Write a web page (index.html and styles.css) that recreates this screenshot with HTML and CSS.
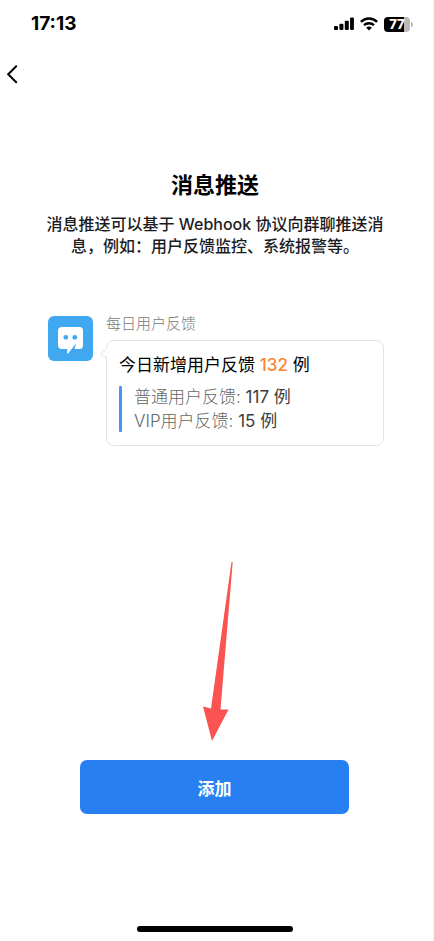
FILE: index.html
```
<!DOCTYPE html>
<html lang="zh-CN">
<head>
<meta charset="utf-8">
<meta name="viewport" content="width=device-width, initial-scale=1">
<title>消息推送</title>
<link rel="stylesheet" href="styles.css">
</head>
<body>
<div class="screen">
  <header>
    <div class="status">
      <time class="clock">17:13</time>
      <div class="indicators">
        <svg width="20" height="14" viewBox="0 0 20 14" aria-hidden="true">
          <rect x="0" y="9" width="4" height="4" rx="1"/>
          <rect x="5.4" y="6.7" width="4" height="6.3" rx="1"/>
          <rect x="10.8" y="3.8" width="4" height="9.2" rx="1"/>
          <rect x="16.1" y="0.5" width="3.8" height="12.5" rx="1"/>
        </svg>
        <svg width="18" height="14" viewBox="0 0 18 14" aria-hidden="true">
          <path d="M0.900 4.900A11.300 11.300 0 0 1 17.100 4.900" fill="none" stroke="#000" stroke-width="2.500"/>
          <path d="M4 8.200A7.200 7.200 0 0 1 14 8.200" fill="none" stroke="#000" stroke-width="2.400"/>
          <path d="M9 13.500L6.200 10.700A3.900 3.900 0 0 1 11.800 10.700Z"/>
        </svg>
        <div class="battery"><span class="level">77</span></div>
      </div>
    </div>
    <nav>
      <button class="back" type="button" aria-label="返回">
        <svg width="12" height="20" viewBox="0 0 12 20" aria-hidden="true">
          <path d="M10.2 2.2L2.2 10.2L10.2 18.2" fill="none" stroke="#000" stroke-width="2" stroke-linecap="round"/>
        </svg>
      </button>
    </nav>
  </header>

  <main>
    <h1>消息推送</h1>
    <p class="intro">消息推送可以基于 Webhook 协议向群聊推送消<br>息，例如：用户反馈监控、系统报警等。</p>

    <section class="message">
      <svg class="avatar" width="45" height="45" viewBox="0 0 45 45" aria-hidden="true">
        <rect width="45" height="45" rx="6" fill="#40a8f0"/>
        <path d="M14 11H31.500a3.500 3.500 0 0 1 3.500 3.500V29.500a3.500 3.500 0 0 1-3.500 3.500H25L19.500 38V33H14a4 4 0 0 1-4-4V15a4 4 0 0 1 4-4Z" fill="#fff"/>
        <path d="M28.200 27L19.500 38H24L26.500 33Z" fill="#40a8f0"/>
        <path d="M28.200 27L19.500 38V33Z" fill="#fff"/>
        <circle cx="17.800" cy="21.300" r="2.400" fill="#40a8f0"/>
        <circle cx="26.800" cy="21.300" r="2.400" fill="#40a8f0"/>
      </svg>
      <div class="body">
        <div class="sender">每日用户反馈</div>
        <div class="bubble">
          <svg class="tail" width="8" height="14" viewBox="0 0 8 14" aria-hidden="true">
            <path d="M7 0.500Q6 3.500 1.500 6Q0.300 7 1.500 8Q4.500 9.500 7 10.500" fill="#fff" stroke="#e3e3e5"/>
            <path d="M7.500 1V10.200" stroke="#fff" stroke-width="2"/>
          </svg>
          <div class="total">今日新增用户反馈 <span class="count">132</span> 例</div>
          <div class="details">
            <div>普通用户反馈: <span class="value">117 例</span></div>
            <div>VIP用户反馈: <span class="value">15 例</span></div>
          </div>
        </div>
      </div>
    </section>
  </main>

  <footer>
    <div class="action">
      <svg class="pointer" width="28" height="180" viewBox="0 0 28 180" aria-hidden="true">
        <path d="M28.500 1H29.700L17.500 148.500L25.500 148.500L9 180L0 145.500L8 147.500Z" fill="#fb5252"/>
      </svg>
      <button class="add" type="button">添加</button>
    </div>
    <div class="home"></div>
  </footer>
</div>
</body>
</html>
```
FILE: styles.css
```
* {
  box-sizing: border-box;
}

body {
  margin: 0;
  background: #fff;
  color: #000;
  font-family: Inter, "Noto Sans CJK SC", sans-serif;
}

button {
  border: 0;
  padding: 0;
  font: inherit;
}

.screen {
  display: flex;
  flex-direction: column;
  min-height: 100vh;
  padding-right: 3px;
  border-right: 1px solid #f5f5f5;
}

.status {
  display: flex;
  justify-content: space-between;
  align-items: center;
  height: 48px;
  padding: 0 20px 0 31px;
}

.clock {
  font-size: 19px;
  font-weight: 700;
  line-height: 24px;
}

.indicators {
  display: flex;
  align-items: center;
  gap: 6px;
}

.battery {
  position: relative;
  width: 26px;
  height: 15px;
  border-radius: 4px;
  background: linear-gradient(90deg, #000 77%, #b9b9b9 77%);
  color: #fff;
  font-size: 13px;
  font-weight: 800;
  line-height: 15px;
  text-align: center;
}

.battery::after {
  content: "";
  position: absolute;
  top: 5px;
  left: 27px;
  width: 2px;
  height: 5px;
  border-radius: 0 2px 2px 0;
  background: #b9b9b9;
}

nav {
  display: flex;
  height: 52px;
  align-items: center;
  padding-left: 6px;
}

.back {
  display: flex;
  background: none;
}

main {
  padding: 69px 46px 0;
}

h1 {
  margin: 0;
  font-size: 22px;
  font-weight: 700;
  line-height: 32px;
  text-align: center;
}

.intro {
  margin: 12px 0 0;
  color: #1c1c1e;
  font-size: 16px;
  font-weight: 500;
  line-height: 22px;
  text-align: center;
}

.message {
  display: flex;
  gap: 13px;
  margin-top: 59px;
  padding-left: 2px;
}

.avatar {
  flex: none;
}

.body {
  flex: 1;
}

.sender {
  color: #777;
  font-size: 15px;
  font-weight: 300;
  line-height: 16px;
}

.bubble {
  position: relative;
  margin-top: 8px;
  padding: 12px;
  border: 1px solid #e3e3e5;
  border-radius: 8px;
  font-size: 17px;
}

.tail {
  position: absolute;
  top: 6px;
  left: -7px;
}

.total {
  line-height: 24px;
}

.count {
  color: #fa8434;
  font-weight: 500;
}

.details {
  position: relative;
  margin-top: 8px;
  padding-left: 15px;
  color: #666;
  font-weight: 300;
  line-height: 24px;
}

.details::before {
  content: "";
  position: absolute;
  top: 1px;
  bottom: 1px;
  left: 0;
  width: 3px;
  border-radius: 1px;
  background: #4b91f7;
}

.value {
  color: #3c3c3e;
  font-weight: 400;
}

footer {
  margin-top: auto;
  padding: 0 81px 9px 80px;
}

.action {
  position: relative;
}

.pointer {
  position: absolute;
  bottom: calc(100% + 19px);
  left: 123px;
  overflow: visible;
}

.add {
  display: block;
  width: 100%;
  height: 54px;
  border-radius: 7px;
  background: #277ff2;
  color: #fff;
  font-size: 17px;
  font-weight: 700;
}

.home {
  width: 156px;
  height: 6px;
  margin: 112px auto 0;
  border-radius: 3px;
  background: #000;
}
```
